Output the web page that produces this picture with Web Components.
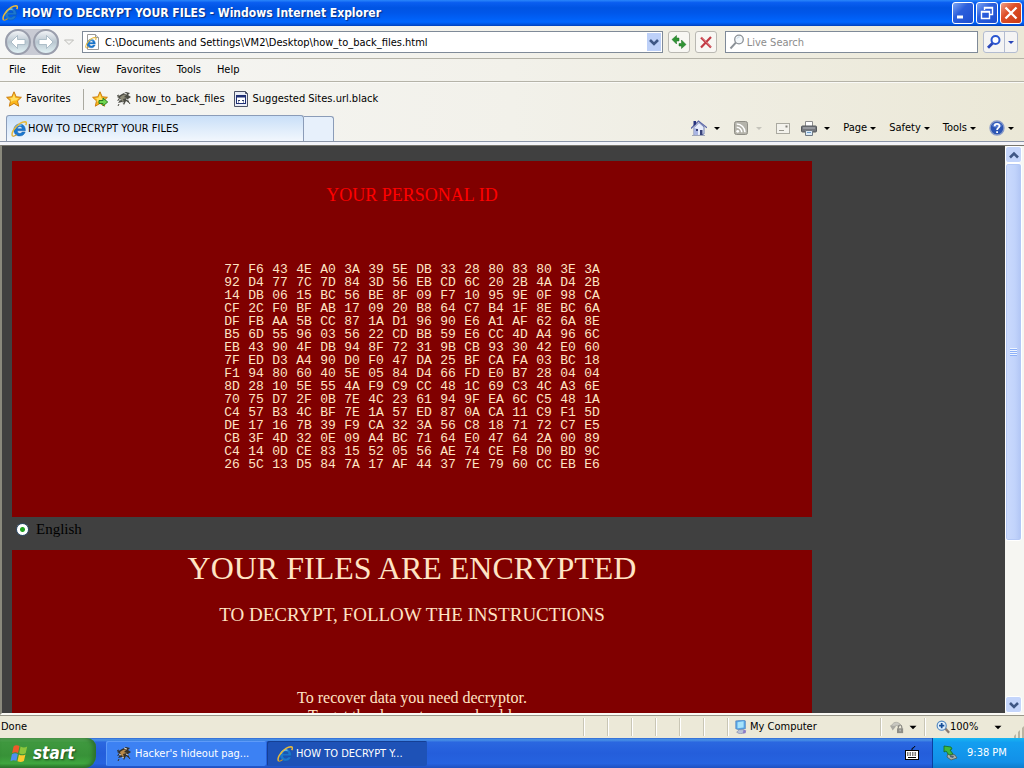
<!DOCTYPE html>
<html lang="en">
<head>
<meta charset="utf-8">
<title>HOW TO DECRYPT YOUR FILES - Windows Internet Explorer</title>
<style>
  html, body { height: 100%; }
  body {
    margin: 0;
    overflow: hidden;
    font: 11px/14px "DejaVu Sans Condensed", "Liberation Sans", sans-serif;
    color: #000;
  }
</style>
</head>
<body>
<ie-window></ie-window>

<script>
'use strict';

(function () {
  // shared by every component that holds controls
  const base = `
    :host, * { box-sizing: border-box; }
    button { font: inherit; color: inherit; background: none; border: 0; margin: 0; padding: 0; display: flex; align-items: center; white-space: nowrap; }
    input { font: inherit; margin: 0; padding: 0; border: 0; outline: 0; background: none; min-width: 0; }
    a { color: inherit; text-decoration: none; white-space: nowrap; }
  `;

  const ie = `
    <path d="M14.400 9.800H6.300c.2 3 3.600 3.300 4.900 1.200h3C13 14 11 15 8.700 15 5 15 2.800 12.300 2.800 9S5.200 3 8.700 3c3.800 0 5.900 3 5.700 6.800zM6.400 7.700h4.800c-.2-2.800-4.500-2.900-4.800 0z" fill="#1c78cf" stroke="#0f559f" stroke-width=".4"/>
    <path d="M4 7.500C4.800 4.500 8 3.400 10.500 4.200" fill="none" stroke="#8fd2f7" stroke-width="1.200"/>
    <path d="M1.600 15C-.8 11.600 7 1.200 14 .8c1.900 0 1.600 1.800.7 3.400" fill="none" stroke="#e6b93c" stroke-width="1.500"/>
    <path d="M1.600 15c1 .6 2.600-.2 4-1.400" fill="none" stroke="#cf9a24" stroke-width="1.200"/>`;
  const star = '<path d="M8 .8l2.200 5 5.200.5-3.900 3.600 1.200 5.300L8 12.400l-4.700 2.800 1.200-5.300L.6 6.300l5.200-.5z" fill="#fbb81c" stroke="#cb7d12"/><path d="M8 3l1.300 4 3.700.3-3 2.200L8 9.500 4.600 11l.6-3L3 7l3.500-.3z" fill="#ffe063"/>';
  const bee = (dark, gold) => `
    <path d="M1 6l5-3 4-2 4 1-2 2 3 2-3 2 1 4-3-2-2 4-2-3-4 1 2-3-3 1 2-3z" fill="${dark}"/>
    <path d="M4 6l3-2 4-1-3 3 3 1-4 1 1 3-3-2z" fill="${gold}"/>
    <path d="M3 8l2 1M8 2l3 1M6 11l2 1M10 8l2 1" stroke="#fff" stroke-width=".8"/>
    <path d="M1 5l2-1M3 13l-1 2M12 10l2 3" stroke="${dark}"/>`;

  const icons = {
    ie,
    star,
    bee: bee('#33302a', '#b98a4a'),
    beegrey: bee('#4c4c44', '#8d8b78'),
    iepage: `<path d="M2.500.5h8l3 3v12h-11z" fill="#fff" stroke="#9a9a9a"/><path d="M10.500.5v3h3" fill="#ddd" stroke="#9a9a9a"/><g transform="translate(0 3) scale(.72)">${ie}</g>`,
    staradd: `${star}<path d="M7 9.500h4V7l4.700 4-4.700 4v-2.500H7z" fill="#6fd650" stroke="#2b7d20"/>`,
    htmlfile: '<path d="M1.500.5h11l2 2v13h-13z" fill="#e9ecf5" stroke="#4c5266"/><path d="M12.500.5v2h2" fill="none" stroke="#4c5266"/><rect x="3.500" y="4.500" width="9" height="8" fill="#fff" stroke="#1f2f75"/><path d="M3 5.500h10" stroke="#1f2f75" stroke-width="2"/><path d="M5 9.500h2M9 9.500h2M5 11h1M10 11h1" stroke="#30406e"/>',
    refresh: '<path d="M1 5.500l4.500-4V4H8v3H5.500v3zM15 10.500l-4.500 4V12H8V9.500h2.500V6z" fill="#2f9433" stroke="#1d6f24" stroke-width=".5"/>',
    stop: '<path d="M3 3.500l10 10M13 3L3 13.500" stroke="#c23a44" stroke-width="2.200"/><path d="M3 3l10 10" stroke="#e58a8f" stroke-width=".6"/>',
    lens: '<circle cx="10" cy="5.500" r="4.300" fill="#f4f8fb" stroke="#8b9197" stroke-width="1.300"/><path d="M6.800 8.700L1.500 14.500" stroke="#8b9197" stroke-width="2"/><path d="M8 4.500c.6-1.200 1.600-1.600 2.600-1.500" fill="none" stroke="#bcd0df"/>',
    find: '<circle cx="9.500" cy="6" r="4" fill="#fff" stroke="#2a56d0" stroke-width="2"/><path d="M6.500 9.200L2 13.800" stroke="#2a46b8" stroke-width="2.800"/>',
    home: '<path d="M3 7.500v7.500l5 .5 5-1.500V7L8 2.500z" fill="#e8edfb" stroke="#7380b5"/><path d="M3 8l4 1v6.500l-4-1z" fill="#a9b5e2"/><path d="M0 8.500L7.500 1 16 7.800" fill="none" stroke="#5a66a8" stroke-width="1.300"/><path d="M2.500 1h2.500v3.200L2.500 6z" fill="#27337d"/><path d="M5 9h2v2H5zM9 10h2.500v5H9z" fill="#39437a"/><path d="M1 15.500h13" stroke="#a0a6b7"/>',
    rss: '<rect x="1.500" y="1.500" width="13" height="13" rx="2" fill="#b4b3aa" stroke="#8f8e86"/><circle cx="4.700" cy="11.300" r="1.400" fill="#fff"/><path d="M3.700 7.200a5.100 5.100 0 015.100 5.100M3.700 4a8.300 8.300 0 018.300 8.300" fill="none" stroke="#fff" stroke-width="1.500"/>',
    mail: '<rect x="1.500" y="3.500" width="13" height="10" fill="#f3f2ec" stroke="#aaa9a0"/><path d="M10.500 5.500h2v2h-2z" fill="#807f79"/><path d="M4 10.500h5" stroke="#96958d"/>',
    printer: '<path d="M4.500 1.500h7v5h-7z" fill="#fff" stroke="#8d8d8d"/><rect x=".5" y="6" width="15" height="6" rx="1" fill="#74777c" stroke="#55585c"/><path d="M2 8h12" stroke="#b7babf"/><path d="M4.500 10.500h7v5h-7z" fill="#dbeaf7" stroke="#707a84"/><path d="M6 12.500h4" stroke="#6c9cc8"/>',
    help: '<circle cx="8" cy="8" r="7" fill="#2c55b4" stroke="#8a9cc8" stroke-width="1.400"/><path d="M3 6a5.500 5.500 0 0110 0c-3 2-7 2-10 0z" fill="#6c90dc" opacity=".7"/><path d="M5.700 6.200C5.700 3.200 10.500 3.300 10.500 6c0 1.800-2.400 1.900-2.400 3.900M8.100 11.300v1.800" fill="none" stroke="#fff" stroke-width="1.800"/>',
    computer: '<path d="M2 1l9-1 2 1v9l-8 1-3-1z" fill="#57a5e6" stroke="#4b7cb6" stroke-width=".7"/><path d="M4 2.500l7-1v7l-7 1z" fill="#a5e2fb"/><path d="M6 11h5l2 3-6 2-4-2z" fill="#b9c2d8" stroke="#7a84a6" stroke-width=".7"/><path d="M11 11l3 1-1 3-3 .5z" fill="#8c7cc8"/>',
    lock: '<path d="M1 8C3 2 8 1 12 5l-2 3C7 5 5 6 4.500 8.500z" fill="#c9c8c1" stroke="#a09f98" stroke-width=".7"/><path d="M0 6l3 6 4-5z" fill="#aaa9a2"/><path d="M9.500 10V8c0-3 4-3 4 0v2" fill="none" stroke="#85847e" stroke-width="1.300"/><rect x="8" y="9.500" width="7" height="5.500" fill="#8e8d86"/><path d="M11.500 11v2" stroke="#ddd"/>',
    zoom: '<path d="M10 9l5 5.500" stroke="#8a7b70" stroke-width="2.600"/><circle cx="6.500" cy="6.500" r="5.200" fill="#e2f1fc" stroke="#4f86c0" stroke-width="1.300"/><path d="M3.500 6.500h6M6.500 3.500v6" stroke="#174f98" stroke-width="2"/>',
    keyboard: '<path d="M8 5V3.500l2-1 1-1.500" fill="none" stroke="#000"/><rect x="1.500" y="5.500" width="13" height="9" fill="#fff" stroke="#000"/><path d="M3 8h10M3 10h10" stroke="#000" stroke-dasharray="1.500 1"/><path d="M4 12.500h8" stroke="#000"/>',
    tray: '<path d="M6 8l7 2 2 3-6 2-4-3z" fill="#aab2ac" stroke="#4d5b50" stroke-width=".8"/><path d="M8 10l4 1-1 2-3-1z" fill="#4e6074"/><path d="M2 1l7 1 1 2-2 1 3 4-4 1-3-4-2 1z" fill="#3fb93c" stroke="#176b1d" stroke-width=".8"/>',
    flag: '<path d="M3 2c2-1.500 3.500-1 5-.3L6.800 7.500C5.300 6.800 3.800 6.500 1.800 7.800z" fill="#ee5a2a"/><path d="M8.900 2.100c1.800 1 3.600 1.100 5.600 0l-1.300 5.700c-2 1.100-3.700.9-5.500 0z" fill="#8cc63c"/><path d="M1.600 8.700c2-1.300 3.500-1 5-.3l-1.200 5.800c-1.500-.7-3-1-5 .3z" fill="#4f8ff0"/><path d="M7.500 8.800c1.800.9 3.500 1 5.500 0l-1.300 5.600c-2 1.100-3.600 1-5.400.1z" fill="#fbc92e"/>',
    back: '<path d="M7.500 1.500L1 8l6.500 6.500v-4H15v-5H7.500z" fill="#fff" stroke="#9fb3bf" stroke-width=".8"/>',
    forward: '<path d="M8.500 1.500L15 8l-6.500 6.500v-4H1v-5h7.500z" fill="#fff" stroke="#9fb3bf" stroke-width=".8"/>',
    recent: '<path d="M3.500 6h9L8 10.500z" fill="#f4f4f2" stroke="#bdbdb9"/>',
    up: '<path d="M4 10.500l4-4 4 4" fill="none" stroke="#3f5785" stroke-width="2.600"/>',
    down: '<path d="M4 6l4 4 4-4" fill="none" stroke="#3f5785" stroke-width="2.600"/>',
    caret: '<path d="M4 6.500h8L8 10.500z" fill="currentColor"/>',
    min: '<path d="M2 12h6" stroke="#fff" stroke-width="3"/>',
    restore: '<path d="M5.500 5V2.500h8v7H11M5 3h9" fill="none" stroke="#fff" stroke-width="1.400"/><path d="M2.500 6.500h8v7h-8zM2 7h9" fill="none" stroke="#fff" stroke-width="1.400"/>',
    close: '<path d="M2.500 2.500l11 11M13.500 2.500l-11 11" stroke="#fff" stroke-width="2.300"/>'
  };

  // small helper so that every element gets an open shadow root
  function define(name, render) {
    customElements.define(name, class extends HTMLElement {
      constructor() {
        super();
        const shadow = this.attachShadow({ mode: 'open' });
        const template = document.createElement('template');
        template.innerHTML = render(this);
        shadow.appendChild(template.content.cloneNode(true));
      }
    });
  }

  class XpIcon extends HTMLElement {
    constructor() {
      super();
      this.attachShadow({ mode: 'open' });
    }

    connectedCallback() {
      this.shadowRoot.innerHTML = `
        <style>
          :host { display: inline-flex; flex: none; width: 16px; height: 16px; }
          svg { width: 100%; height: 100%; }
        </style>
        <svg viewBox="0 0 16 16" aria-hidden="true">${icons[this.getAttribute('name')]}</svg>
      `;
    }
  }
  customElements.define('xp-icon', XpIcon);

  define('title-bar', () => `
    <style>${base}
      :host {
        display: flex; align-items: center; height: 26px; padding: 0 2px; flex: none;
        background: linear-gradient(#2a86fb 0, #0a5ef0 10%, #0054e3 30%, #0057ea 50%, #0066ff 85%, #0050d8 95%, #003fb8 100%);
      }
      h1 {
        flex: 1; margin: 0 0 0 4px; color: #fff; white-space: nowrap;
        font: bold 12px/16px "DejaVu Sans Condensed", sans-serif; text-shadow: 1px 1px 1px #0a2d80;
      }
      .buttons { display: flex; gap: 2px; }
      button {
        width: 22px; height: 22px; justify-content: center; border: 1px solid #fff; border-radius: 3px;
        background: linear-gradient(135deg, #7ea6f4, #2c5fdc 40%, #1c4ed0);
      }
      .close { background: linear-gradient(135deg, #f0a088, #de4f28 40%, #c93a12); }
    </style>
    <xp-icon name="ie"></xp-icon>
    <h1><slot></slot></h1>
    <div class="buttons">
      <button aria-label="Minimize"><xp-icon name="min"></xp-icon></button>
      <button aria-label="Restore"><xp-icon name="restore"></xp-icon></button>
      <button class="close" aria-label="Close"><xp-icon name="close"></xp-icon></button>
    </div>
  `);

  define('nav-bar', () => `
    <style>${base}
      :host {
        display: flex; align-items: center; gap: 5px; height: 33px; padding: 0 6px 0 5px; flex: none;
        border-bottom: 1px solid #b5b3a8;
      }
      .travel { display: flex; align-items: center; gap: 2px; }
      .travel div { display: flex; gap: 2px; border-radius: 13px; background: #c9cbd4; }
      .travel div button {
        width: 26px; height: 26px; justify-content: center; border: 2px solid #9a9eac; border-radius: 50%;
        background: linear-gradient(#f1f3f6, #b9c6d0 50%, #e2f2f5);
      }
      .field { display: flex; align-items: center; height: 22px; background: #fff; border: 1px solid #7f8a98; }
      .field input { flex: 1; height: 20px; }
      .address { flex: 1; gap: 4px; padding-left: 2px; }
      .address button { width: 14px; height: 18px; margin-right: 1px; justify-content: center; background: #bdd0f8; }
      .square { width: 22px; height: 22px; justify-content: center; border: 1px solid #b9b8b2; border-radius: 3px; background: #f8f7f3; }
      .search { width: 25%; gap: 2px; padding-left: 3px; margin-left: 3px; }
      .search input::placeholder { color: #8c8c8c; opacity: 1; }
      .go { display: flex; border: 1px solid #b3bcd0; border-radius: 3px; background: #f4f4f4; height: 22px; }
      .go button { width: 20px; justify-content: center; color: #2a46b8; }
      .go button + button { width: 13px; border-left: 1px solid #b3bcd0; }
      .go xp-icon[name="caret"] { width: 12px; height: 12px; }
    </style>
    <div class="travel">
      <div>
        <button aria-label="Back"><xp-icon name="back"></xp-icon></button>
        <button aria-label="Forward"><xp-icon name="forward"></xp-icon></button>
      </div>
      <button aria-label="Recent pages"><xp-icon name="recent"></xp-icon></button>
    </div>
    <div class="field address">
      <xp-icon name="iepage"></xp-icon>
      <input type="text" aria-label="Address" value="C:\\Documents and Settings\\VM2\\Desktop\\how_to_back_files.html">
      <button aria-label="Show addresses"><xp-icon name="down"></xp-icon></button>
    </div>
    <button class="square" aria-label="Refresh"><xp-icon name="refresh"></xp-icon></button>
    <button class="square" aria-label="Stop"><xp-icon name="stop"></xp-icon></button>
    <div class="field search">
      <xp-icon name="lens"></xp-icon>
      <input type="text" aria-label="Search" placeholder="Live Search">
    </div>
    <div class="go">
      <button aria-label="Search"><xp-icon name="find"></xp-icon></button>
      <button aria-label="Search options"><xp-icon name="caret"></xp-icon></button>
    </div>
  `);

  define('menu-bar', () => `
    <style>${base}
      :host { display: flex; align-items: center; gap: 16px; height: 23px; padding: 0 9px; flex: none; border-bottom: 1px solid #b5b3a8; }
    </style>
    ${['File', 'Edit', 'View', 'Favorites', 'Tools', 'Help'].map(t => `<button>${t}</button>`).join('')}
  `);

  define('favorites-bar', () => `
    <style>${base}
      :host { display: flex; align-items: center; gap: 8px; height: 33px; padding: 0 6px; flex: none; border-top: 1px solid #fafaf7; }
      button, a { display: flex; align-items: center; gap: 4px; }
      hr { width: 1px; height: 21px; margin: 0 0 0 4px; border: 0; background: #aaa9a0; }
    </style>
    <button><xp-icon name="star"></xp-icon>Favorites</button>
    <hr>
    <button aria-label="Add to Favorites Bar"><xp-icon name="staradd"></xp-icon></button>
    <a href="#"><xp-icon name="beegrey"></xp-icon>how_to_back_files</a>
    <a href="#"><xp-icon name="htmlfile"></xp-icon>Suggested Sites.url.black</a>
  `);

  define('tab-row', () => `
    <style>${base}
      :host { display: flex; align-items: flex-end; height: 27px; padding-left: 6px; flex: none; border-bottom: 1px solid #8b95a8; }
      .tab {
        flex: 0 1 298px; height: 26px; gap: 1px; padding: 0 4px; border: 1px solid #8b9cb8; border-bottom: 0;
        border-radius: 3px 3px 0 0; background: linear-gradient(#c9dff8, #e2eefb 60%, #f2f7fd);
      }
      .new { width: 30px; height: 25px; border: 1px solid #8b9cb8; border-left: 0; border-bottom: 0; border-radius: 0 3px 0 0; background: #e7f0fb; }
      .tools { display: flex; align-items: center; align-self: center; margin-left: auto; padding-right: 7px; gap: 10px; }
      .pair, .tools button { display: flex; align-items: center; }
      .pair { gap: 4px; }
      .tools xp-icon[name="caret"] { width: 12px; height: 12px; }
      .faded { color: #c5c4bb; }
    </style>
    <button class="tab"><xp-icon name="ie"></xp-icon><slot></slot></button>
    <button class="new" aria-label="New tab"></button>
    <div class="tools">
      <div class="pair"><button aria-label="Home"><xp-icon name="home"></xp-icon></button><button aria-label="Home pages"><xp-icon name="caret"></xp-icon></button></div>
      <div class="pair faded"><button aria-label="Feeds"><xp-icon name="rss"></xp-icon></button><button aria-label="Feed list"><xp-icon name="caret"></xp-icon></button></div>
      <button aria-label="Read mail"><xp-icon name="mail"></xp-icon></button>
      <div class="pair"><button aria-label="Print"><xp-icon name="printer"></xp-icon></button><button aria-label="Print options"><xp-icon name="caret"></xp-icon></button></div>
      <button>Page<xp-icon name="caret"></xp-icon></button>
      <button>Safety<xp-icon name="caret"></xp-icon></button>
      <button>Tools<xp-icon name="caret"></xp-icon></button>
      <button aria-label="Help"><xp-icon name="help"></xp-icon><xp-icon name="caret"></xp-icon></button>
    </div>
  `);

  define('scroll-bar', () => `
    <style>${base}
      :host { display: flex; flex-direction: column; width: 17px; flex: none; background: #f6f6f2; }
      button { height: 17px; justify-content: center; border: 1px solid #fff; border-radius: 3px; background: #c4d5fb; flex: none; }
      .track { flex: 1; }
      .thumb {
        height: 71%; display: flex; align-items: center; justify-content: center; border: 1px solid #fff;
        border-radius: 3px; background: linear-gradient(90deg, #cbdafd, #c1d3fb 60%, #b1c5f4); box-shadow: inset 0 0 0 1px #b4c8f6;
      }
      .grip { width: 7px; height: 8px; background: repeating-linear-gradient(#eef4fe 0 1px, #8cb0f8 1px 2px); }
    </style>
    <button aria-label="Scroll up"><xp-icon name="up"></xp-icon></button>
    <div class="track"><div class="thumb"><div class="grip"></div></div></div>
    <button aria-label="Scroll down"><xp-icon name="down"></xp-icon></button>
  `);

  const id = [
    '77 F6 43 4E A0 3A 39 5E DB 33 28 80 83 80 3E 3A',
    '92 D4 77 7C 7D 84 3D 56 EB CD 6C 20 2B 4A D4 2B',
    '14 DB 06 15 BC 56 BE 8F 09 F7 10 95 9E 0F 98 CA',
    'CF 2C F0 BF AB 17 09 20 B8 64 C7 B4 1F 8E BC 6A',
    'DF FB AA 5B CC 87 1A D1 96 90 E6 A1 AF 62 6A 8E',
    'B5 6D 55 96 03 56 22 CD BB 59 E6 CC 4D A4 96 6C',
    'EB 43 90 4F DB 94 8F 72 31 9B CB 93 30 42 E0 60',
    '7F ED D3 A4 90 D0 F0 47 DA 25 BF CA FA 03 BC 18',
    'F1 94 80 60 40 5E 05 84 D4 66 FD E0 B7 28 04 04',
    '8D 28 10 5E 55 4A F9 C9 CC 48 1C 69 C3 4C A3 6E',
    '70 75 D7 2F 0B 7E 4C 23 61 94 9F EA 6C C5 48 1A',
    'C4 57 B3 4C BF 7E 1A 57 ED 87 0A CA 11 C9 F1 5D',
    'DE 17 16 7B 39 F9 CA 32 3A 56 C8 18 71 72 C7 E5',
    'CB 3F 4D 32 0E 09 A4 BC 71 64 E0 47 64 2A 00 89',
    'C4 14 0D CE 83 15 52 05 56 AE 74 CE F8 D0 BD 9C',
    '26 5C 13 D5 84 7A 17 AF 44 37 7E 79 60 CC EB E6'
  ];
  const idRows = id
    .map(row => `<tr>${row.split(' ').map(b => `<td>${b}</td>`).join(' ')}</tr>`)
    .join('');

  define('ransom-page', () => `
    <style>${base}
      :host {
        display: block; flex: 1; min-width: 0; overflow: hidden; padding: 15px 10px 0; background: #404040;
        font: 16px/18px "Liberation Serif", serif;
      }
      section { max-width: 800px; background: #800000; color: #ffe4c4; text-align: center; }
      .id { padding: 23px 0 46px; }
      h2, h3, p { margin: 0; font-weight: normal; }
      h3 { font-size: 19px; line-height: 22px; }
      .id h3 { color: #f00; font-size: 18px; margin-bottom: 57px; }
      table { margin: 0 auto; border-collapse: collapse; font: 13px/13px "Liberation Mono", monospace; }
      td { width: 24px; padding: 0; }
      .lang { display: flex; align-items: center; gap: 7px; height: 24px; margin-bottom: 9px; padding-left: 4px; font-size: 15px; }
      .lang input {
        appearance: none; width: 13px; height: 13px; border: 1px solid #33506f; border-radius: 50%;
        background: radial-gradient(#21a121 0 2px, #fff 3px);
      }
      h2 { font-size: 32px; line-height: 37px; margin-bottom: 17px; }
      .note { height: 200px; }
      .note h3 { margin-bottom: 63px; }
    </style>
    <section class="id">
      <h3>YOUR PERSONAL ID</h3>
      <table>${idRows}</table>
    </section>
    <div class="lang"><input type="radio" id="en" name="lang" checked><label for="en">English</label></div>
    <section class="note">
      <h2>YOUR FILES ARE ENCRYPTED</h2>
      <h3>TO DECRYPT, FOLLOW THE INSTRUCTIONS</h3>
      <p>To recover data you need decryptor.<br>To get the decryptor you should:</p>
    </section>
  `);

  define('status-bar', () => `
    <style>${base}
      :host { display: flex; align-items: center; height: 23px; flex: none; background: #ece9d8; border-top: 1px solid #99978a; }
      .text { flex: 1; padding-left: 1px; }
      .cell { display: flex; align-items: center; align-self: stretch; width: 24px; margin: 2px 0; border-left: 1px solid #c9c6b5; box-shadow: inset 1px 0 #fff; }
      .zone { width: 153px; gap: 2px; padding-left: 6px; }
      .lock { width: 44px; padding-left: 9px; gap: 2px; }
      .zoom { width: 100px; padding-left: 11px; }
      .zoom button { flex: 1; justify-content: space-between; padding-right: 19px; }
      .zoom span { display: flex; }
      .cell xp-icon { width: 14px; height: 14px; }
      .grip { align-self: flex-end; width: 12px; height: 12px; background: repeating-linear-gradient(90deg, transparent 0 2px, #b8b4a2 2px 4px); clip-path: polygon(100% 0, 100% 100%, 0 100%); margin-left: -12px; }
    </style>
    <span class="text">Done</span>
    ${'<div class="cell"></div>'.repeat(6)}
    <div class="cell zone"><xp-icon name="computer"></xp-icon>My Computer</div>
    <div class="cell lock"><xp-icon name="lock"></xp-icon><xp-icon name="caret"></xp-icon></div>
    <div class="cell zoom"><button><span><xp-icon name="zoom"></xp-icon>100%</span><xp-icon name="caret"></xp-icon></button></div>
    <div class="grip"></div>
  `);

  define('task-bar', () => `
    <style>${base}
      :host {
        display: flex; align-items: stretch; height: 30px; flex: none; color: #fff;
        background: linear-gradient(#3168d5 0, #4993e6 6%, #2b67e0 14%, #245edb 50%, #2663e0 85%, #1f50c0 100%);
      }
      .start {
        width: 96px; gap: 4px; padding-left: 10px; border-radius: 0 9px 12px 0;
        font: italic bold 17px/20px "DejaVu Sans Condensed", sans-serif; text-shadow: 1px 1px 2px #1c4a1c;
        background: linear-gradient(#5aab5a 0, #3f983f 15%, #389238 60%, #3fa63f 85%, #2b782b 100%);
        box-shadow: inset -3px 0 4px #2d6f2d;
      }
      .start xp-icon { width: 19px; height: 19px; }
      nav { display: flex; flex: 1; gap: 1px; padding: 3px 0 2px 10px; }
      nav button { width: 160px; gap: 3px; padding: 0 10px; border-radius: 2px; background: #3c81f3; box-shadow: inset 1px 1px #5e9bf8; }
      nav button.active { background: #1e52b7; box-shadow: inset 1px 1px #153f94; }
      .keys { align-self: center; margin-right: 12px; }
      .tray { display: flex; align-items: center; gap: 9px; width: 92px; padding-left: 9px; border-left: 1px solid #0a3fa0; background: linear-gradient(#18b6f2 0, #139ef0 15%, #1290e8 80%, #0f7ccb 100%); }
    </style>
    <button class="start"><xp-icon name="flag"></xp-icon>start</button>
    <nav>
      <button><xp-icon name="bee"></xp-icon>Hacker's hideout pag...</button>
      <button class="active"><xp-icon name="ie"></xp-icon>HOW TO DECRYPT Y...</button>
    </nav>
    <xp-icon class="keys" name="keyboard"></xp-icon>
    <div class="tray"><xp-icon name="tray"></xp-icon><time>9:38 PM</time></div>
  `);

  define('ie-window', () => `
    <style>
      :host { display: flex; flex-direction: column; height: 100vh; }
      .chrome { flex: none; background: linear-gradient(90deg, #f6f6f5, #f2f1ea 50%, #ebe8d7); }
      .view {
        display: flex; flex: 1; min-height: 0; padding-right: 2px; background: #f6f6f2;
        border-top: 1px solid #77756c; border-left: 2px solid #8a897c; border-bottom: 2px solid #fbfaf5;
      }
      .edge { height: 3px; background: #f3f3f8; }
    </style>
    <title-bar>HOW TO DECRYPT YOUR FILES - Windows Internet Explorer</title-bar>
    <div class="chrome">
      <nav-bar></nav-bar>
      <menu-bar></menu-bar>
      <favorites-bar></favorites-bar>
      <tab-row>HOW TO DECRYPT YOUR FILES</tab-row>
      <div class="edge"></div>
    </div>
    <div class="view"><ransom-page></ransom-page><scroll-bar></scroll-bar></div>
    <status-bar></status-bar>
    <task-bar></task-bar>
  `);
})();
</script>
</body>
</html>
